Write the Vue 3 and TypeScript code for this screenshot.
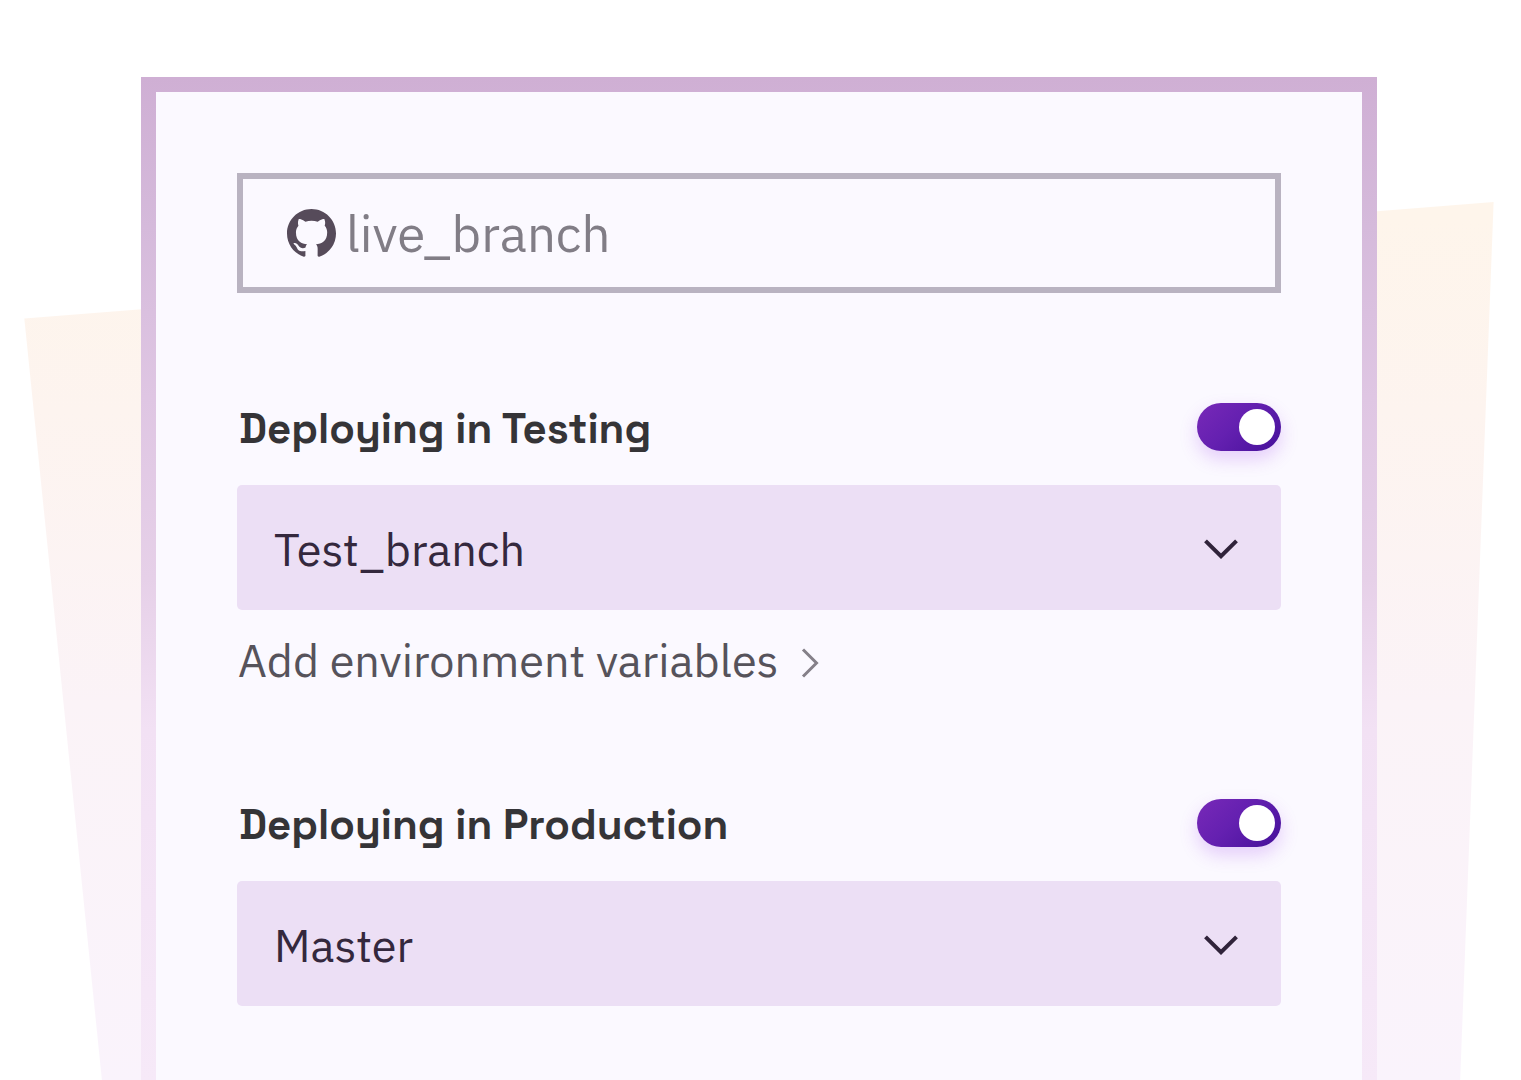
<script setup lang="ts">
import { reactive, ref } from 'vue'

interface Environment {
  id: string
  title: string
  enabled: boolean
  branch: string
  hasVariables: boolean
}

const repository = ref('live_branch')
const branches = ['Test_branch', 'Master']

const environments = reactive<Environment[]>([
  { id: 'testing', title: 'Deploying in Testing', enabled: true, branch: 'Test_branch', hasVariables: true },
  { id: 'production', title: 'Deploying in Production', enabled: true, branch: 'Master', hasVariables: false },
])
</script>

<template>
  <main class="page">
    <form class="panel" @submit.prevent>
      <div class="content">
        <label class="repo">
          <svg class="github" viewBox="0 0 16 16" aria-hidden="true">
            <path
              d="M8 0C3.58 0 0 3.58 0 8c0 3.54 2.29 6.53 5.47 7.59.4.07.55-.17.55-.38 0-.19-.01-.82-.01-1.49-2.01.37-2.53-.49-2.69-.94-.09-.23-.48-.94-.82-1.13-.28-.15-.68-.52-.01-.53.63-.01 1.08.58 1.23.82.72 1.21 1.87.87 2.33.66.07-.52.28-.87.51-1.07-1.78-.2-3.64-.89-3.64-3.95 0-.87.31-1.59.82-2.15-.08-.2-.36-1.02.08-2.12 0 0 .67-.21 2.2.82.64-.18 1.32-.27 2-.27s1.36.09 2 .27c1.53-1.04 2.2-.82 2.2-.82.44 1.1.16 1.92.08 2.12.51.56.82 1.27.82 2.15 0 3.07-1.87 3.75-3.65 3.95.29.25.54.73.54 1.48 0 1.07-.01 1.93-.01 2.2 0 .21.15.46.55.38A8.01 8.01 0 0 0 16 8c0-4.42-3.58-8-8-8z"
            />
          </svg>
          <input v-model="repository" class="repo-input" type="text" aria-label="Repository branch" />
        </label>

        <section v-for="env in environments" :key="env.id" class="environment">
          <div class="heading">
            <label class="title" :for="`${env.id}-toggle`">{{ env.title }}</label>
            <input :id="`${env.id}-toggle`" v-model="env.enabled" class="toggle" type="checkbox" role="switch" />
          </div>
          <div class="picker">
            <select v-model="env.branch" class="select" :aria-label="`${env.title} branch`">
              <option v-for="name in branches" :key="name" :value="name">{{ name }}</option>
            </select>
            <svg class="chevron" viewBox="0 0 34 20" aria-hidden="true">
              <path d="M1.5 1.8 17 17.2 32.5 1.8" />
            </svg>
          </div>
          <a v-if="env.hasVariables" class="variables" href="#variables">
            Add environment variables
            <svg class="arrow" viewBox="0 0 18 30" aria-hidden="true">
              <path d="M2 1.5 15.5 15 2 28.5" />
            </svg>
          </a>
        </section>
      </div>
    </form>
  </main>
</template>

<style>
body {
  background: #ffffff;
}
</style>

<style scoped>
.page {
  position: relative;
  display: flex;
  box-sizing: border-box;
  min-height: 100vh;
  padding: 77px 144px 0 141px;
  font-family: 'IBM Plex Sans', Roboto, sans-serif;
}

.page::before {
  content: '';
  position: absolute;
  inset: 0;
  background: linear-gradient(#fef5eb 20%, #fdf4ef 38%, #fbf3f7 65%, #faf3fc 100%);
  clip-path: polygon(1.6% 29.5%, 98.2% 18.7%, 96% 100%, 6.7% 100%);
}

.panel {
  position: relative;
  flex: 1;
  display: flex;
  min-width: 0;
  padding: 15px 15px 0;
  background: linear-gradient(#cfafd4 0%, #d5badb 15%, #dfc6e3 32%, #e6d0e8 50%, #f2e1f4 65%, #f6e9f8 100%);
}

.content {
  flex: 1;
  min-width: 0;
  padding: 81px 81px 73px;
  background: #fbf9ff;
}

.repo {
  display: flex;
  align-items: center;
  gap: 10px;
  box-sizing: border-box;
  height: 120px;
  padding: 0 44px;
  border: 6px solid #b9b3c1;
}

.github {
  flex: none;
  width: 49px;
  height: 49px;
  fill: #564b5a;
}

.repo-input {
  flex: 1;
  min-width: 0;
  padding: 0;
  border: 0;
  outline: 0;
  background: transparent;
  color: #817d86;
  font: 400 51px/64px 'IBM Plex Sans', Roboto, sans-serif;
}

.environment {
  margin-top: 110px;
}

.heading {
  display: flex;
  align-items: center;
  justify-content: space-between;
  height: 48px;
}

.title {
  padding: 4px 0 0 2px;
  color: #353437;
  font: 700 42px/48px 'Space Grotesk', Inter, sans-serif;
}

.toggle {
  appearance: none;
  width: 84px;
  height: 48px;
  margin: 0;
  padding: 6px;
  border-radius: 24px;
  background: #b9b3c1;
  cursor: pointer;
}

.toggle::before {
  content: '';
  display: block;
  width: 36px;
  height: 36px;
  border-radius: 50%;
  background: #ffffff;
}

.toggle:checked {
  background: linear-gradient(135deg, #7829b8 0%, #6420b0 45%, #45109a 100%);
  box-shadow: 0 8px 18px rgba(150, 50, 230, 0.22);
}

.toggle:checked::before {
  margin-left: auto;
}

.picker {
  position: relative;
  margin-top: 34px;
}

.select {
  appearance: none;
  display: block;
  box-sizing: border-box;
  width: 100%;
  height: 125px;
  padding: 2px 90px 0 37px;
  border: 0;
  border-radius: 5px;
  background: #ecdff5;
  color: #34283d;
  font: 400 45px/60px 'IBM Plex Sans', Roboto, sans-serif;
}

.chevron {
  position: absolute;
  top: 54px;
  right: 43px;
  width: 34px;
  height: 20px;
  fill: none;
  stroke: #30233a;
  stroke-width: 4;
  pointer-events: none;
}

.variables {
  display: flex;
  align-items: center;
  gap: 22px;
  margin-top: 19px;
  padding: 2px 0 0 1px;
  color: #56535b;
  font-size: 45px;
  line-height: 58px;
  text-decoration: none;
}

.arrow {
  width: 18px;
  height: 30px;
  margin-top: 6px;
  fill: none;
  stroke: #858089;
  stroke-width: 3;
}
</style>
